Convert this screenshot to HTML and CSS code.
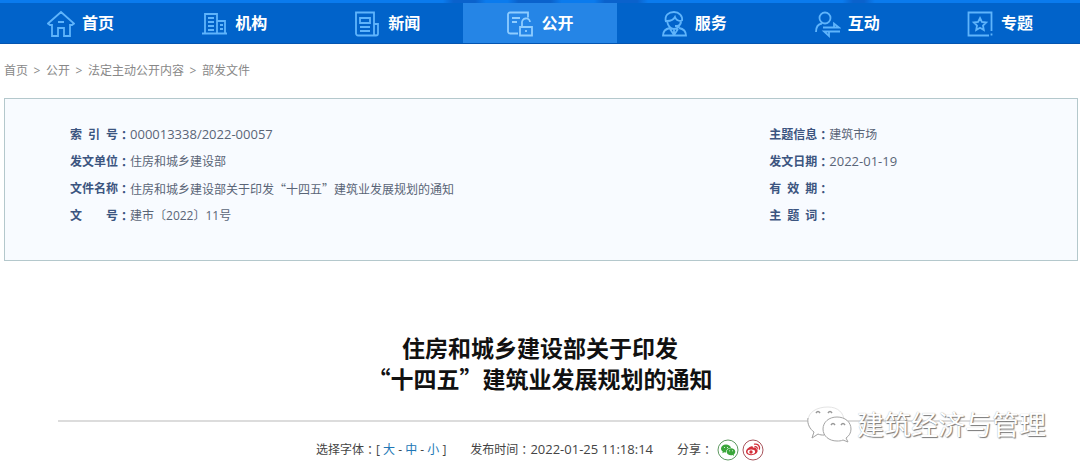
FILE: index.html
```html
<!DOCTYPE html>
<html lang="zh-CN">
<head>
<meta charset="utf-8">
<title>住房和城乡建设部关于印发“十四五”建筑业发展规划的通知</title>
<link rel="stylesheet" href="styles.css">
</head>
<body>
<nav class="nav">
  <a class="nav-item" href="#"><svg class="nav-icon" viewBox="0 0 28 28"><path d="M1 13.500 14 2l13 11.500-2 1.500h-2v11h-6v-8h-6v8H5V15H3zM11 12h6"/></svg>首页</a>
  <a class="nav-item" href="#"><svg class="nav-icon" viewBox="0 0 28 28"><path d="M2 23.500h25M5 23V4h12v19M17 11h8v12M8 8h6M8 12h6M8 16h6M8 20h6M20 15h3M20 19h3"/></svg>机构</a>
  <a class="nav-item" href="#"><svg class="nav-icon" viewBox="0 0 28 28"><path d="M21 25.500H5a2 2 0 0 1-2-2V2.500h18zM21 14h4v9.500a2 2 0 0 1-4 0M7 8h10v5H7zM7 17h10M7 21h10"/></svg>新闻</a>
  <a class="nav-item active" href="#"><svg class="nav-icon" viewBox="0 0 28 28"><path d="M12 23.500H4a2 2 0 0 1-2-2v-17a2 2 0 0 1 2-2h18v5M6 8h8M6 12h5M14 17h12v8.500H14zM16 17v-4a4 4 0 0 1 8-1M20 20v2"/></svg>公开</a>
  <a class="nav-item" href="#"><svg class="nav-icon" viewBox="0 0 28 28"><path d="M6 12C4 5 9 2 14 2s9 4 8 9M7 11c5 0 7-2 8-4 1 3 3 4 6 4-1 5-3 8-7 8s-6-3-7-8zM21 12c0 3-3 4-6 4M10 18c-5 1-7 4-7 7.500h23c0-4-2-6.500-7-7.500M10 19l4 6 4-6M14 20v5"/></svg>服务</a>
  <a class="nav-item" href="#"><svg class="nav-icon" viewBox="0 0 28 28"><circle cx="12" cy="8" r="5.500"/><path d="M3 22c0-5 2-8 6-8.500M10 17.500h16l-5-4v4M27 21.500H11l5 4.500v-4.500"/></svg>互动</a>
  <a class="nav-item" href="#"><svg class="nav-icon" viewBox="0 0 28 28"><path d="M25.500 21V2.500h-23v23H23M25.500 23.500v2M14 8l1.900 4 4.300.5-3.200 3 .8 4.500-3.800-2.200-3.800 2.200.8-4.500-3.200-3 4.300-.5z"/></svg>专题</a>
</nav>

<main>
  <div class="crumbs">
    <a href="#">首页</a><span class="sep">&gt;</span><a href="#">公开</a><span class="sep">&gt;</span><a href="#">法定主动公开内容</a><span class="sep">&gt;</span><a href="#">部发文件</a>
  </div>

  <section class="meta">
    <dl class="meta-col">
      <div class="meta-row"><dt><span class="label">索 引 号</span><span class="colon">：</span></dt><dd class="number">000013338/2022-00057</dd></div>
      <div class="meta-row"><dt><span class="label">发文单位</span><span class="colon">：</span></dt><dd>住房和城乡建设部</dd></div>
      <div class="meta-row"><dt><span class="label">文件名称</span><span class="colon">：</span></dt><dd class="cjk">住房和城乡建设部关于印发“十四五”建筑业发展规划的通知</dd></div>
      <div class="meta-row"><dt><span class="label">文 号</span><span class="colon">：</span></dt><dd>建市〔2022〕11号</dd></div>
    </dl>
    <dl class="meta-col">
      <div class="meta-row"><dt><span class="label">主题信息</span><span class="colon">：</span></dt><dd>建筑市场</dd></div>
      <div class="meta-row"><dt><span class="label">发文日期</span><span class="colon">：</span></dt><dd class="number">2022-01-19</dd></div>
      <div class="meta-row"><dt><span class="label">有 效 期</span><span class="colon">：</span></dt><dd></dd></div>
      <div class="meta-row"><dt><span class="label">主 题 词</span><span class="colon">：</span></dt><dd></dd></div>
    </dl>
  </section>

  <article class="article">
    <h1 class="title">住房和城乡建设部关于印发<br>“十四五”建筑业发展规划的通知</h1>
    <div class="info">
      <div class="info-group">选择字体<span class="colon">：</span><span class="sizes">[ <a href="#">大</a> - <a href="#">中</a> - <a href="#">小</a> ]</span></div>
      <div class="info-group">发布时间<span class="colon">：</span><time class="number">2022-01-25 11:18:14</time></div>
      <div class="info-group">分享<span class="colon">：</span>
        <span class="share">
          <a href="#" aria-label="微信"><svg viewBox="0 0 22 22"><circle cx="11" cy="11" r="10" fill="#fff" stroke="#5f9a62"/><path fill="#3aa63a" d="M9 5.500c-3 0-5 1.800-5 4 0 1.300.7 2.300 1.800 3l-.5 1.700 2-1c.6.200 1.200.200 1.700.200 0-2.700 2-4.600 5-4.700C13.500 6.800 11.500 5.500 9 5.500z"/><path fill="#3aa63a" d="M14 9.300c-2.400 0-4.300 1.500-4.300 3.500s1.900 3.500 4.300 3.500c.5 0 1 0 1.500-.2l1.600.9-.4-1.500c1-.7 1.600-1.600 1.600-2.700 0-2-1.900-3.500-4.300-3.500z"/><path stroke="#fff" stroke-linecap="round" d="M7.400 8.500h0M10.500 8.500h0M12.700 11.800h0M15.400 11.800h0"/></svg></a>
          <a href="#" aria-label="微博"><svg viewBox="0 0 22 22"><circle cx="11" cy="11" r="10" fill="#fff" stroke="#a8545c"/><path fill="#d32f3a" d="M9 7.500c1.500-.6 2.200.1 1.900 1.300 2-.8 3.600-.3 3.100 1.300 1.300.4 1.800 1.200 1.600 2.200-.4 2.200-3.200 3.900-6.400 3.900-2.900 0-5.200-1.400-5.200-3.500S6.600 8.300 9 7.500z"/><ellipse cx="9.300" cy="12.800" rx="3.800" ry="2.400" fill="#fff"/><circle cx="9" cy="13" r="1.700" fill="#d32f3a"/><path fill="none" stroke="#d32f3a" stroke-width="1.300" stroke-linecap="round" d="M12.500 5.200c3.300-.6 5.600 1.800 4.900 5M13 7.700c1.600-.2 2.500.8 2.200 2.200"/></svg></a>
        </span>
      </div>
    </div>
    <div class="watermark">
      <svg viewBox="0 0 46 38"><g fill="#fff"><path stroke="#e4e4e4" d="M22 2C11 2 2 7 2 16c0 5 2 8 6 11l-2 6 6-4c3 1 6 1 9 1 9 0 17-6 17-14S32 2 22 2z"/><path stroke="#a5a5a5" d="M2 13c-1 6 2 11 6 14l-2 6 6-4c2 1 4 1 6 1"/><path stroke="#a5a5a5" d="M31 12c-8 0-14 5-14 12s6 12 14 12c2 0 4 0 6-1l5 2-2-4c3-2 5-5 5-9 0-7-6-12-14-12z"/></g><path fill="none" stroke="#999" stroke-width="1.500" d="M10 8q2-3 4 0M22 8q2-3 4 0M25 20q2-3 4 0M35 20q2-3 4 0"/></svg>
      <span>建筑经济与管理</span>
    </div>
  </article>
</main>
</body>
</html>
```

FILE: styles.css
```css
* {
  box-sizing: border-box;
}

body {
  margin: 0;
  background: #fff;
  color: #444;
  font: 12px/27px "Open Sans", "Noto Sans CJK SC", sans-serif;
}

a {
  color: inherit;
  text-decoration: none;
}

.nav {
  display: grid;
  grid-template-columns: repeat(7, 1fr);
  padding: 3px 4px 0;
  border-bottom: 1px solid #0455b0;
  background: linear-gradient(90deg, #0a7bee 41%, #0a62cc 42% 44%, #0a7bee 45% 47%, #0a62cc 48% 51%, #0a7bee 52% 55%, #0a62cc 56% 59%, #0a7bee 60% 78%, #0a62cc 79% 80%, #0a7bee 81%) top / 100% 3px no-repeat #0163ca;
}

.nav-item {
  display: flex;
  align-items: center;
  justify-content: center;
  gap: 7px;
  height: 40px;
  padding-top: 1px;
  color: #fff;
  font-size: 16px;
  font-weight: 700;
}

.nav-item.active {
  background: #2585e6;
}

.nav-icon {
  width: 28px;
  height: 28px;
  fill: none;
  stroke: #5fb4fb;
  stroke-width: 1.8;
}

.active .nav-icon {
  stroke: #8fcdff;
}

.crumbs {
  padding: 13px 4px;
  color: #888;
}

.sep {
  display: inline-block;
  width: 18px;
  text-align: center;
}

.meta {
  display: grid;
  grid-template-columns: 25fr 11fr;
  margin: 1px 2px 0 4px;
  padding: 22px 0 31px 65px;
  border: 1px solid #b4c8cc;
  background: #f8fbff;
  color: #5a6577;
}

.meta-col,
.meta-row dd {
  margin: 0;
}

.meta-row {
  display: flex;
  height: 27px;
}

.meta-row dt {
  display: flex;
  color: #3c5580;
  font-weight: 700;
}

.label {
  width: 48px;
  text-align: justify;
  text-align-last: justify;
}

.colon {
  font-family: "Noto Sans CJK TC", sans-serif;
}

.cjk {
  font-family: "Noto Sans CJK SC", sans-serif;
}

.number {
  font-size: 13px;
}

.article {
  position: relative;
  padding: 71px 58px 0;
}

.title {
  margin: 0;
  padding-bottom: 26px;
  border-bottom: 2px solid #dcdcdc;
  color: #111;
  font: 700 23px/31px "Noto Sans CJK SC", sans-serif;
  text-align: center;
}

.info {
  display: flex;
  justify-content: center;
  gap: 24px;
  padding-top: 14px;
}

.info-group {
  display: flex;
  align-items: center;
}

.sizes {
  white-space: pre;
}

.sizes a {
  color: #2176b5;
}

.share {
  display: flex;
  gap: 3px;
  margin-left: 4px;
}

.share a {
  display: flex;
}

.share svg {
  width: 22px;
  height: 22px;
}

.watermark {
  position: absolute;
  right: 34px;
  bottom: 20px;
  display: flex;
  align-items: center;
  gap: 5px;
  color: #fff;
  font: 27px/38px "Noto Sans CJK SC", sans-serif;
  text-shadow: 1px 1px 1px #777, 0 0 1px #aaa;
}

.watermark svg {
  width: 46px;
  height: 38px;
}
```
